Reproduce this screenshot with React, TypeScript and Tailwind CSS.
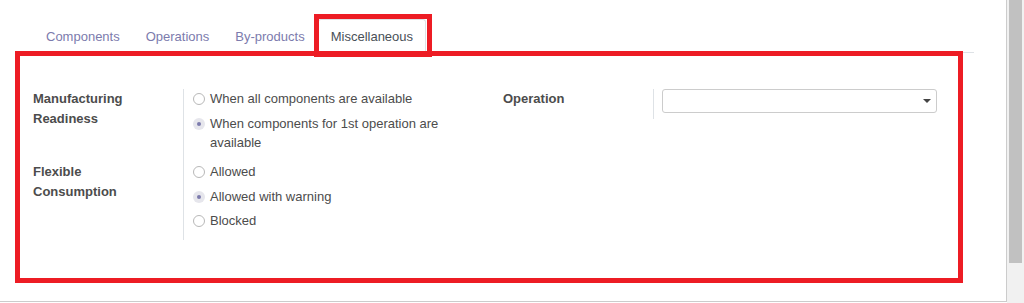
import React from 'react';

const font = "[font-family:'Liberation_Sans',Arial,sans-serif]";

const tabs = ['Components', 'Operations', 'By-products', 'Miscellaneous'];

const Radio = ({ label, checked }: { label: string; checked?: boolean }) => (
  <div className="flex items-start mb-[5px] last:mb-0">
    <span
      className={`mt-[4px] w-[12px] h-[12px] rounded-full shrink-0 flex items-center justify-center ${
        checked ? 'bg-[#e6e6ec]' : 'border border-[#b8b8b8] bg-white'
      }`}
    >
      {checked && <span className="w-[4px] h-[4px] rounded-full bg-[#7c7bad]" />}
    </span>
    <span className="ml-[5px] leading-[19.5px] text-[#4c4c4c]">{label}</span>
  </div>
);

const FieldRow = ({ label, children, pb }: { label: string; children: React.ReactNode; pb: string }) => (
  <div className="flex">
    <div className="w-[150px] shrink-0 font-bold leading-[19.5px] text-[#4c4c4c] pr-[20px]">{label}</div>
    <div className={`flex-1 border-l border-[#dee2e6] pl-[9px] ${pb}`}>{children}</div>
  </div>
);

export default function App() {
  return (
    <div className={`relative w-[1024px] h-[303px] bg-white flex ${font} text-[13px]`}>
      <div className="w-[1007px] h-[302px] border-r border-b border-[#cccccc]">
        {/* Notebook tabs */}
        <div className="pt-[19px] pl-[33px]">
          <div className="flex w-[941px] border-b border-[#dee2e6]">
            {tabs.map((t) => {
              const active = t === 'Miscellaneous';
              return (
                <div
                  key={t}
                  className={`h-[34px] -mb-px px-[12px] pt-[2px] flex items-center border rounded-t-[3px] ${
                    active
                      ? 'border-[#dee2e6] border-b-white bg-white text-[#495057]'
                      : 'border-transparent text-[#7c7bad]'
                  }`}
                >
                  {t}
                </div>
              );
            })}
          </div>
        </div>

        {/* Tab content */}
        <div className="pt-[36px] pl-[33px] flex">
          <div className="w-[470px]">
            <FieldRow label="Manufacturing Readiness" pb="pb-[9.5px]">
              <div className="pr-[24px]">
                <Radio label="When all components are available" />
                <Radio label="When components for 1st operation are available" checked />
              </div>
            </FieldRow>
            <FieldRow label="Flexible Consumption" pb="pb-[9.5px]">
              <Radio label="Allowed" />
              <Radio label="Allowed with warning" checked />
              <Radio label="Blocked" />
            </FieldRow>
          </div>
          <div className="w-[470px]">
            <div className="flex">
              <div className="w-[150px] shrink-0 font-bold leading-[19.5px] text-[#4c4c4c]">Operation</div>
              <div className="border-l border-[#dee2e6] pl-[8px] pb-[6px]">
                <div className="w-[275px] h-[24px] border border-[#cccccc] rounded-[3px] bg-white flex items-center justify-end pr-[5px]">
                  <span className="w-0 h-0 border-l-[4px] border-r-[4px] border-t-[4px] border-l-transparent border-r-transparent border-t-[#444]" />
                </div>
              </div>
            </div>
          </div>
        </div>
      </div>

      {/* Scrollbar */}
      <div className="w-[17px] h-[303px] bg-[#f1f1f1] flex justify-center">
        <div className="w-[13px] h-[263px] bg-[#c1c1c1]" />
      </div>

      {/* Annotation boxes */}
      <div className="absolute left-[15px] top-[51px] w-[948px] h-[232px] border-[5px] border-[#ed1c24]" />
      <div className="absolute left-[314px] top-[14px] w-[118px] h-[43px] border-[5px] border-[#ed1c24]" />
    </div>
  );
}
